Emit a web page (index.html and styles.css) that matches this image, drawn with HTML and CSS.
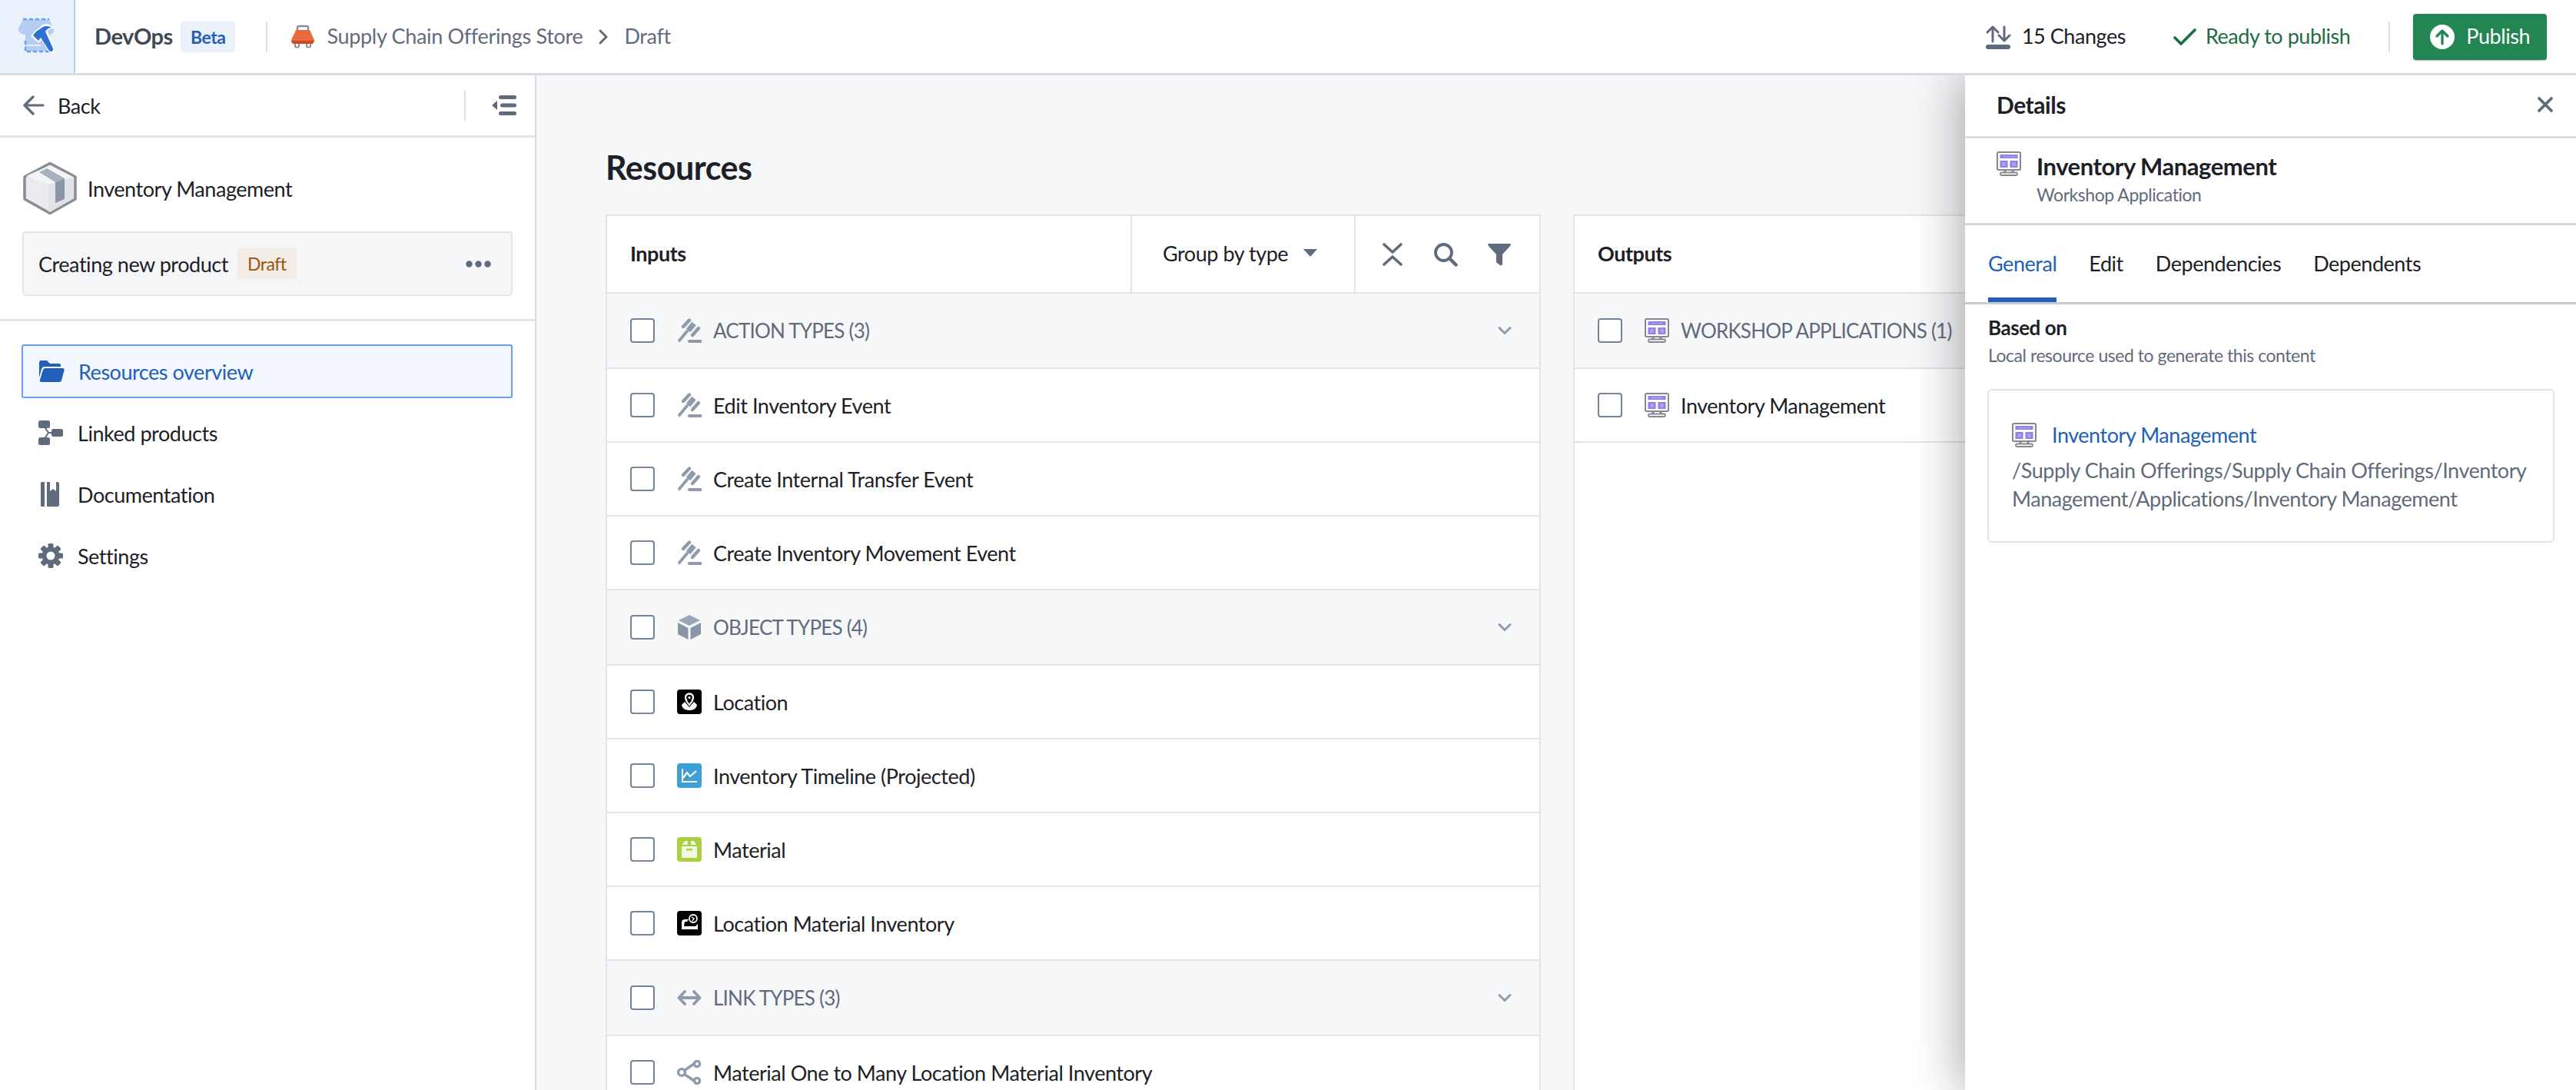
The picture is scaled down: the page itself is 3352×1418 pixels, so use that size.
FILE: index.html
```html
<!DOCTYPE html>
<html lang="en">
<head>
    <meta charset="UTF-8">
    <title>DevOps</title>
    <link rel="stylesheet" href="styles.css">
</head>
<body>
    <svg class="defs" width="0" height="0">
        <symbol id="i-action" viewBox="0 0 32 32">
            <g fill="none" stroke="#8f9bac" stroke-linecap="round">
                <path d="M3 29 L13 17" stroke-width="3.800"/>
                <path d="M8 11 L16 2.500" stroke-width="4.400"/>
                <path d="M14.500 16 L22 7" stroke-width="7" stroke-linecap="butt"/>
                <path d="M20 22 L28 13" stroke-width="4.400"/>
                <path d="M16 30 H31" stroke-width="4"/>
            </g>
        </symbol>
        <symbol id="i-cube" viewBox="0 0 32 32">
            <path d="M16 0 L30 7 L16 14 L2 7 Z" fill="#9aa5b5"/>
            <path d="M1 10 L14.500 17 V32 L1 25 Z" fill="#8a96a8"/>
            <path d="M31 10 L17.500 17 V32 L31 25 Z" fill="#8a96a8"/>
        </symbol>
        <symbol id="i-link" viewBox="0 0 32 32">
            <g fill="none" stroke="#8f9bac" stroke-width="3.800" stroke-linecap="round" stroke-linejoin="round">
                <path d="M3 16 H29"/>
                <path d="M10 8 L2.500 16 L10 24"/>
                <path d="M22 8 L29.500 16 L22 24"/>
            </g>
        </symbol>
        <symbol id="i-share" viewBox="0 0 32 32">
            <g fill="none" stroke="#8f9bac" stroke-width="3.400">
                <path d="M9 14 L22 5"/>
                <path d="M9 18 L22 27"/>
                <circle cx="6" cy="16" r="4.400"/>
                <circle cx="26" cy="5" r="3.600"/>
                <circle cx="26" cy="27" r="3.600"/>
            </g>
        </symbol>
        <symbol id="i-workshop" viewBox="0 0 32 32">
            <rect x="1" y="1" width="30" height="23" rx="1.500" fill="#fff" stroke="#85888f" stroke-width="2"/>
            <rect x="4.500" y="4" width="23" height="5" fill="#8f80e8"/>
            <rect x="8" y="5.800" width="16" height="1.600" fill="#aaa0ef"/>
            <rect x="4.500" y="12" width="10" height="9" fill="#8f80e8"/>
            <rect x="7" y="14" width="5" height="5" fill="#aaa0ef"/>
            <rect x="17.500" y="12" width="10" height="9" fill="#8f80e8"/>
            <rect x="20" y="14" width="5" height="5" fill="#aaa0ef"/>
            <path d="M11 24 V28 M21 24 V28" stroke="#85888f" stroke-width="3"/>
            <rect x="5" y="27.500" width="22" height="3.500" rx="1.500" fill="#fff" stroke="#85888f" stroke-width="1.800"/>
        </symbol>
        <symbol id="i-chevron" viewBox="0 0 20 20">
            <path d="M3 6.500 L10 13.500 L17 6.500" fill="none" stroke="#8f9bac" stroke-width="3" stroke-linecap="round" stroke-linejoin="round"/>
        </symbol>
    </svg>

    <header class="topbar">
        <div class="logo-cell">
            <svg width="50" height="50" viewBox="0 0 50 50">
                <path d="M7 2 H41 L47 14 C48 19 44 22 42 22 V44 H10 V22 C4 22 0 18 1 14 Z" fill="#b5cdf1"/>
                <path d="M7 2 H41 M10 30 V44 H41" fill="none" stroke="#6a9fe8" stroke-width="2.400" stroke-dasharray="5 3"/>
                <path d="M12 36 H30" stroke="#eaf1fc" stroke-width="2"/>
                <path d="M22 18 L33 9 C38 7 46 9 48 15 C44 13 41 14 39 18 L48 40 C49 45 44 48 41 45 L31 29 L27 33 L17 24 Z" fill="#fff"/>
                <path d="M24 18 L33 12 C37 10 42 11 44 13 C40 13 38 15 36 18 L46 40 C47 44 43 45 41 43 L30 26 L27 30 L20 23 Z" fill="#2d72d2"/>
            </svg>
        </div>
        <span class="app-name lift">DevOps</span>
        <span class="tag tag-blue">Beta</span>
        <span class="vline"></span>
        <svg class="crumb-icon" width="32" height="32" viewBox="0 0 32 32">
            <path d="M9 8 V4 C9 3 10 2 11 2 H21 C22 2 23 3 23 4 V8" fill="none" stroke="#8a8d91" stroke-width="2.400"/>
            <path d="M7 7 H25 L31 20 C31 22 31 23 30 23 H2 C1 23 1 22 1 20 Z" fill="#e96a40"/>
            <path d="M1 21 H31 L29 25 H3 Z" fill="#cc4a22"/>
            <path d="M6 25 V28 C6 30 11 30 11 28 V25 M21 25 V28 C21 30 26 30 26 28 V25" fill="none" stroke="#8a8d91" stroke-width="2"/>
        </svg>
        <span class="crumb lift">Supply Chain Offerings Store</span>
        <svg class="crumb-sep" width="14" height="20" viewBox="0 0 14 20"><path d="M3 2 L11 10 L3 18" fill="none" stroke="#5f6b7c" stroke-width="3" stroke-linecap="round" stroke-linejoin="round"/></svg>
        <span class="crumb lift">Draft</span>

        <div class="topbar-right">
            <svg width="34" height="32" viewBox="0 0 34 32">
                <path d="M10 22 V3 M3 10 L10 3 L17 10" fill="none" stroke="#5f6b7c" stroke-width="3" stroke-linecap="round" stroke-linejoin="round"/>
                <path d="M25 3 V21 M18 14 L25 21 L32 14" fill="none" stroke="#5f6b7c" stroke-width="3" stroke-linecap="round" stroke-linejoin="round"/>
                <rect x="1" y="26" width="32" height="6" rx="3" fill="#5f6b7c"/>
            </svg>
            <span class="changes lift">15 Changes</span>
            <svg class="check" width="30" height="24" viewBox="0 0 30 24"><path d="M2 13 L10 21 L28 3" fill="none" stroke="#1c6e42" stroke-width="3.600" stroke-linecap="round" stroke-linejoin="round"/></svg>
            <span class="ready lift">Ready to publish</span>
            <span class="vline vline-right"></span>
            <button class="publish">
                <svg width="32" height="32" viewBox="0 0 32 32">
                    <circle cx="16" cy="16" r="16" fill="#fff"/>
                    <path d="M16 25 V8 M9 15 L16 8 L23 15" fill="none" stroke="#238551" stroke-width="3.200" stroke-linecap="round" stroke-linejoin="round"/>
                </svg>
                <span class="lift">Publish</span>
            </button>
        </div>
    </header>

    <div class="layout">
        <aside class="sidebar">
            <div class="back-row">
                <svg width="28" height="26" viewBox="0 0 28 26"><path d="M26 13 H3 M13 2 L2 13 L13 24" fill="none" stroke="#5f6b7c" stroke-width="3.200" stroke-linecap="round" stroke-linejoin="round"/></svg>
                <span class="back-label">Back</span>
                <span class="back-divider"></span>
                <svg width="32" height="26" viewBox="0 0 32 26">
                    <path d="M7 7 V19 L0 13 Z" fill="#5f6b7c"/>
                    <rect x="9" y="0" width="23" height="5" rx="2.500" fill="#5f6b7c"/>
                    <rect x="11" y="10.500" width="21" height="5" rx="2.500" fill="#5f6b7c"/>
                    <rect x="9" y="21" width="23" height="5" rx="2.500" fill="#5f6b7c"/>
                </svg>
            </div>
            <div class="product">
                <div class="product-title">
                    <svg width="70" height="68" viewBox="0 0 70 68">
                        <path d="M35 1.500 L68 19 V48 L35 66.500 L2 48 V19 Z" fill="#e9ebee" stroke="#8a8d91" stroke-width="3.500" stroke-linejoin="round"/>
                        <path d="M35 4 L66 19.500 L33 29 L4 18 Z" fill="#f3f4f6"/>
                        <path d="M33 29 V64 L35 65 L66 47 V20 Z" fill="#dfe2e6"/>
                        <path d="M42 26 L54 21 V48 L42 53 Z" fill="#8a96a8"/>
                        <path d="M21 13 L31 8 L54 21 L42 26 Z" fill="#a8b1be"/>
                    </svg>
                    <span>Inventory Management</span>
                </div>
                <div class="branch-card">
                    <span>Creating new product</span>
                    <span class="tag tag-orange">Draft</span>
                    <svg class="dots" width="33" height="9" viewBox="0 0 33 9">
                        <circle cx="4.500" cy="4.500" r="4.200" fill="#5f6b7c"/>
                        <circle cx="16.500" cy="4.500" r="4.200" fill="#5f6b7c"/>
                        <circle cx="28.500" cy="4.500" r="4.200" fill="#5f6b7c"/>
                    </svg>
                </div>
            </div>
            <nav class="nav">
                <a class="nav-item active">
                    <svg width="34" height="28" viewBox="0 0 34 28">
                        <path d="M1 3 C1 1 2 0 3 0 H11 L15 4 H27 C28 4 29 5 29 6 V8 H8 C6 8 5 9 4 11 L1 22 Z" fill="#2160b8"/>
                        <path d="M9 10 H32 C33 10 34 11 33.500 13 L30 26 C29.500 27 29 28 27 28 H4 C2 28 1.500 27 2 25 L6 12 C6.500 11 7 10 9 10 Z" fill="#2160b8"/>
                    </svg>
                    Resources overview
                </a>
                <a class="nav-item">
                    <svg width="32" height="32" viewBox="0 0 32 32">
                        <path d="M7 7 L13 16 L7 25 M13 16 H22" fill="none" stroke="#5f6b7c" stroke-width="2"/>
                        <rect x="0" y="0" width="15" height="10" rx="2.500" fill="#5f6b7c"/>
                        <rect x="17" y="11" width="15" height="10" rx="2.500" fill="#5f6b7c"/>
                        <rect x="0" y="22" width="15" height="10" rx="2.500" fill="#5f6b7c"/>
                    </svg>
                    Linked products
                </a>
                <a class="nav-item">
                    <svg width="32" height="32" viewBox="0 0 32 32">
                        <path d="M4 0 H8 V32 H4 C3 32 3 31 3 30 V2 C3 1 3 0 4 0 Z" fill="#5f6b7c"/>
                        <path d="M11 0 H15 V12 L19 9 L23 12 V0 H25 C26 0 27 1 27 2 V30 C27 31 26 32 25 32 H11 Z" fill="#5f6b7c"/>
                    </svg>
                    Documentation
                </a>
                <a class="nav-item">
                    <svg width="32" height="32" viewBox="0 0 32 32">
                        <g fill="#5f6b7c">
                            <rect x="12.500" y="0" width="7" height="32" rx="1.500"/>
                            <rect x="12.500" y="0" width="7" height="32" rx="1.500" transform="rotate(45 16 16)"/>
                            <rect x="12.500" y="0" width="7" height="32" rx="1.500" transform="rotate(90 16 16)"/>
                            <rect x="12.500" y="0" width="7" height="32" rx="1.500" transform="rotate(135 16 16)"/>
                            <circle cx="16" cy="16" r="11.500"/>
                        </g>
                        <circle cx="16" cy="16" r="5.500" fill="#fff"/>
                    </svg>
                    Settings
                </a>
            </nav>
        </aside>

        <main class="main">
            <h1 class="page-title">Resources</h1>
            <div class="columns">
                <section class="panel">
                    <div class="panel-head">
                        <span class="panel-title">Inputs</span>
                        <div class="head-cell group-by">
                            Group by type
                            <svg width="18" height="10" viewBox="0 0 18 10"><path d="M0 0 H18 L9 10 Z" fill="#5f6b7c"/></svg>
                        </div>
                        <div class="head-cell head-tools">
                            <svg width="28" height="32" viewBox="0 0 28 32"><path d="M3 3 L14 13 L25 3 M3 29 L14 19 L25 29" fill="none" stroke="#5f6b7c" stroke-width="3.600" stroke-linecap="round" stroke-linejoin="round"/></svg>
                            <svg width="32" height="32" viewBox="0 0 32 32"><circle cx="13.500" cy="13.500" r="10.500" fill="none" stroke="#5f6b7c" stroke-width="3.800"/><path d="M21 21 L29.500 29.500" stroke="#5f6b7c" stroke-width="4.500" stroke-linecap="round"/></svg>
                            <svg width="30" height="30" viewBox="0 0 30 30"><path d="M1 1 H29 C30 1 30 3 29 4 L19 15 V27 C19 29 17 30 16 29 L12 26 C11 25.500 11 25 11 24 V15 L1 4 C0 3 0 1 1 1 Z" fill="#5f6b7c"/></svg>
                        </div>
                    </div>
                    <div class="row group-row"><span class="box"></span><svg class="ico"><use href="#i-action"/></svg><span>ACTION TYPES (3)</span><svg class="chev"><use href="#i-chevron"/></svg></div>
                    <div class="row"><span class="box"></span><svg class="ico"><use href="#i-action"/></svg><span>Edit Inventory Event</span></div>
                    <div class="row"><span class="box"></span><svg class="ico"><use href="#i-action"/></svg><span>Create Internal Transfer Event</span></div>
                    <div class="row"><span class="box"></span><svg class="ico"><use href="#i-action"/></svg><span>Create Inventory Movement Event</span></div>
                    <div class="row group-row"><span class="box"></span><svg class="ico"><use href="#i-cube"/></svg><span>OBJECT TYPES (4)</span><svg class="chev"><use href="#i-chevron"/></svg></div>
                    <div class="row"><span class="box"></span>
                        <svg class="ico" viewBox="0 0 32 32">
                            <rect width="32" height="32" rx="4" fill="#000"/>
                            <circle cx="16" cy="10.500" r="5" fill="none" stroke="#fff" stroke-width="2.400"/>
                            <path d="M11.500 14 L16 20 L20.500 14" fill="#000" stroke="#fff" stroke-width="2"/>
                            <circle cx="16" cy="10.500" r="1.600" fill="#fff"/>
                            <path d="M10 16 L6 20 C7 25 11 27 16 27 C21 27 25 25 26 20 L22 16 L16 23 Z" fill="#fff"/>
                        </svg><span>Location</span></div>
                    <div class="row"><span class="box"></span>
                        <svg class="ico" viewBox="0 0 32 32">
                            <rect width="32" height="32" rx="4" fill="#3ba0d8"/>
                            <path d="M7 7 V24 H26" fill="none" stroke="#fff" stroke-width="2"/>
                            <path d="M8 19 L13 12 L17 17 L25 10" fill="none" stroke="#fff" stroke-width="2.200"/>
                        </svg><span>Inventory Timeline (Projected)</span></div>
                    <div class="row"><span class="box"></span>
                        <svg class="ico" viewBox="0 0 32 32">
                            <rect width="32" height="32" rx="4" fill="#a8d13f"/>
                            <path d="M10 5 H22 L26 11 V27 H6 V11 Z" fill="#f4f8e2"/>
                            <path d="M6 11 H26" stroke="#a8d13f" stroke-width="2"/>
                            <path d="M14 5 H18 V11 H14 Z" fill="#a8d13f"/>
                            <rect x="12" y="15" width="8" height="2.400" fill="#a8d13f"/>
                        </svg><span>Material</span></div>
                    <div class="row"><span class="box"></span>
                        <svg class="ico" viewBox="0 0 32 32">
                            <rect width="32" height="32" rx="4" fill="#000"/>
                            <path d="M6 24 V15 C6 12 8 11 11 11 H15 L13 14 H10 L9 20 H24 L27 17 V24 H6 Z" fill="#fff"/>
                            <circle cx="21" cy="10" r="5" fill="none" stroke="#fff" stroke-width="1.800"/>
                            <path d="M19 8 L22 10 L20 13" fill="none" stroke="#fff" stroke-width="1.400"/>
                        </svg><span>Location Material Inventory</span></div>
                    <div class="row group-row"><span class="box"></span><svg class="ico"><use href="#i-link"/></svg><span>LINK TYPES (3)</span><svg class="chev"><use href="#i-chevron"/></svg></div>
                    <div class="row"><span class="box"></span><svg class="ico"><use href="#i-share"/></svg><span>Material One to Many Location Material Inventory</span></div>
                </section>
                <section class="panel">
                    <div class="panel-head">
                        <span class="panel-title">Outputs</span>
                    </div>
                    <div class="row group-row"><span class="box"></span><svg class="ico"><use href="#i-workshop"/></svg><span>WORKSHOP APPLICATIONS (1)</span></div>
                    <div class="row"><span class="box"></span><svg class="ico"><use href="#i-workshop"/></svg><span>Inventory Management</span></div>
                </section>
            </div>

            <aside class="details">
                <div class="details-head">
                    <span>Details</span>
                    <svg width="20" height="20" viewBox="0 0 20 20"><path d="M2 2 L18 18 M18 2 L2 18" stroke="#5f6b7c" stroke-width="3.800" stroke-linecap="round"/></svg>
                </div>
                <div class="details-item">
                    <svg class="ico"><use href="#i-workshop"/></svg>
                    <div>
                        <div class="item-name">Inventory Management</div>
                        <div class="item-type">Workshop Application</div>
                    </div>
                </div>
                <div class="tabs">
                    <span class="tab selected">General</span>
                    <span class="tab">Edit</span>
                    <span class="tab">Dependencies</span>
                    <span class="tab">Dependents</span>
                </div>
                <div class="details-body">
                    <div class="based-on">Based on</div>
                    <div class="based-sub">Local resource used to generate this content</div>
                    <div class="source-card">
                        <div class="source-link">
                            <svg class="ico"><use href="#i-workshop"/></svg>
                            <span>Inventory Management</span>
                        </div>
                        <div class="source-path">/Supply Chain Offerings/Supply Chain Offerings/Inventory Management/Applications/Inventory Management</div>
                    </div>
                </div>
            </aside>
        </main>
    </div>
</body>
</html>
```

FILE: styles.css
```css
* {
    box-sizing: border-box;
}
html, body {
    height: 100%;
}
body {
    margin: 0;
    display: flex;
    flex-direction: column;
    overflow: hidden;
    font-family: "Lato", "Open Sans", sans-serif;
    font-size: 27px;
    letter-spacing: -0.017em;
    color: #1c2127;
    background-color: #fff;
}
.defs {
    position: absolute;
}

/* top bar */
.topbar {
    height: 98px;
    flex-shrink: 0;
    display: flex;
    align-items: center;
    border-bottom: 3px solid #d8dce2;
    color: #5f6b7c;
}
.lift {
    margin-bottom: 3px;
}
.logo-cell {
    width: 98px;
    height: 100%;
    display: flex;
    align-items: center;
    justify-content: center;
    background-color: #ebf1fb;
    border-right: 2px solid #b9cef0;
}
.app-name {
    margin-left: 25px;
    font-size: 29px;
    font-weight: 700;
    color: #404854;
}
.tag {
    display: inline-flex;
    align-items: center;
    height: 40px;
    padding: 0 13px;
    border-radius: 4px;
    font-size: 23px;
}
.tag-blue {
    margin-left: 10px;
    background-color: #ebf1fb;
    color: #2160b8;
    font-weight: 700;
}
.tag-orange {
    margin-left: 12px;
    background-color: #f3ebe5;
    color: #96560f;
}
.vline {
    width: 2px;
    height: 40px;
    margin-left: 40px;
    background-color: #dcdfe3;
}
.crumb-icon {
    margin: 0 15px 0 30px;
}
.crumb-sep {
    margin: 0 20px;
}
.crumb {
    letter-spacing: -0.012em;
}
.topbar-right {
    margin-left: auto;
    padding-right: 38px;
    display: flex;
    align-items: center;
}
.changes {
    margin-left: 14px;
    color: #1c2127;
}
.check {
    margin: 0 12px 0 62px;
}
.ready {
    color: #1c6e42;
}
.vline-right {
    margin: 0 30px 0 50px;
}
.publish {
    height: 60px;
    padding: 0 22px;
    display: flex;
    align-items: center;
    gap: 15px;
    border: none;
    border-radius: 4px;
    background-color: #238551;
    color: #fff;
    font: inherit;
    letter-spacing: inherit;
    box-shadow: 0 1px 2px rgba(17, 20, 24, .3);
}

.layout {
    flex: 1;
    display: flex;
    min-height: 0;
}

/* left column */
.sidebar {
    width: 698px;
    flex-shrink: 0;
    border-right: 2px solid #d8dce2;
    background-color: #fff;
}
.back-row {
    height: 81px;
    padding: 0 24px 0 30px;
    display: flex;
    align-items: center;
    border-bottom: 3px solid #e1e4e8;
}
.back-label {
    margin-left: 17px;
    flex: 1;
}
.back-divider {
    width: 2px;
    height: 40px;
    margin-right: 34px;
    background-color: #dcdfe3;
}
.product {
    height: 239px;
    padding: 32px 29px 0 29px;
    border-bottom: 3px solid #e1e4e8;
}
.product-title {
    display: flex;
    align-items: center;
    gap: 14px;
    height: 68px;
}
.product-title svg {
    margin-left: 1px;
}
.branch-card {
    margin-top: 22px;
    height: 84px;
    padding: 0 26px 0 19px;
    display: flex;
    align-items: center;
    background-color: #f5f6f8;
    border: 2px solid #e4e6ea;
    border-radius: 4px;
}
.dots {
    margin-left: auto;
}
.nav {
    padding: 30px 29px 0 28px;
    display: flex;
    flex-direction: column;
    gap: 10px;
}
.nav-item {
    height: 70px;
    padding-left: 20px;
    display: flex;
    align-items: center;
    gap: 19px;
    border: 2px solid transparent;
    border-radius: 3px;
}
.nav-item.active {
    gap: 18px;
    border-color: #6a9ff0;
    background-color: #f3f7fe;
    color: #2160b8;
}

/* resources */
.main {
    position: relative;
    flex: 1;
    overflow: hidden;
    padding: 0 88px 0 90px;
    background-color: #f6f7f9;
}
.page-title {
    height: 181px;
    margin: 0;
    padding-top: 94px;
    font-size: 43px;
    line-height: 52px;
    font-weight: 700;
    color: #1c2127;
}
.columns {
    display: grid;
    grid-template-columns: 1fr 1fr;
    gap: 42px;
    height: 100%;
}
.panel {
    background-color: #fff;
    border: 2px solid #e2e4e8;
    border-bottom: none;
}
.panel-head {
    height: 101px;
    display: flex;
    align-items: stretch;
    border-bottom: 2px solid #e2e4e8;
}
.panel-title {
    flex: 1;
    padding: 0 0 3px 30px;
    display: flex;
    align-items: center;
    font-weight: 700;
}
.head-cell {
    display: flex;
    align-items: center;
    border-left: 2px solid #e2e4e8;
}
.group-by {
    width: 291px;
    padding: 0 0 3px 40px;
    gap: 20px;
}
.head-tools {
    width: 241px;
    padding-left: 34px;
    gap: 39px;
}
.row {
    height: 96px;
    padding-left: 30px;
    display: flex;
    align-items: center;
    border-bottom: 2px solid #e2e4e8;
}
.group-row {
    height: 98px;
    background-color: #f6f7f9;
    color: #5f6b7c;
    font-size: 26px;
    letter-spacing: -0.03em;
}
.box {
    width: 32px;
    height: 32px;
    flex-shrink: 0;
    margin-right: 29px;
    border: 2px solid #72839b;
    border-radius: 4px;
    background-color: #fff;
}
.ico {
    width: 32px;
    height: 32px;
    flex-shrink: 0;
    margin-right: 15px;
}
.chev {
    width: 20px;
    height: 20px;
    margin-left: auto;
    margin-right: 35px;
}

/* details drawer */
.details {
    position: absolute;
    top: 0;
    right: 0;
    bottom: 0;
    width: 795px;
    background-color: #fff;
    box-shadow: -4px 0 60px rgba(17, 20, 24, .38);
}
.details-head {
    height: 82px;
    padding: 0 30px 3px 41px;
    display: flex;
    align-items: center;
    justify-content: space-between;
    border-bottom: 3px solid #dcdee2;
    font-size: 30px;
    font-weight: 700;
}
.details-item {
    height: 113px;
    padding: 15px 0 0 41px;
    display: flex;
    border-bottom: 3px solid #d5d7db;
}
.details-item .ico {
    margin: 2px 20px 0 0;
}
.item-name {
    font-size: 31px;
    line-height: 42px;
    font-weight: 700;
}
.item-type {
    font-size: 23px;
    line-height: 32px;
    color: #5f6b7c;
}
.tabs {
    height: 103px;
    padding-left: 30px;
    display: flex;
    gap: 42px;
    border-bottom: 3px solid #c8cacd;
}
.tab {
    height: 100px;
    padding-top: 30px;
    line-height: 40px;
}
.tab.selected {
    color: #2160b8;
    border-bottom: 6px solid #2160b8;
}
.details-body {
    padding: 12px 28px 0 30px;
}
.based-on {
    line-height: 36px;
    font-weight: 700;
    font-size: 26px;
}
.based-sub {
    margin-top: 0;
    line-height: 36px;
    font-size: 23px;
    color: #5f6b7c;
}
.source-card {
    margin: 26px 0 0 -1px;
    height: 200px;
    padding: 41px 30px 0 30px;
    border: 2px solid #e1e3e7;
    border-radius: 6px;
}
.source-link {
    display: flex;
    align-items: center;
    color: #2160b8;
}
.source-link .ico {
    margin-right: 20px;
}
.source-path {
    margin-top: 11px;
    line-height: 37px;
    color: #5f6b7c;
}
```
